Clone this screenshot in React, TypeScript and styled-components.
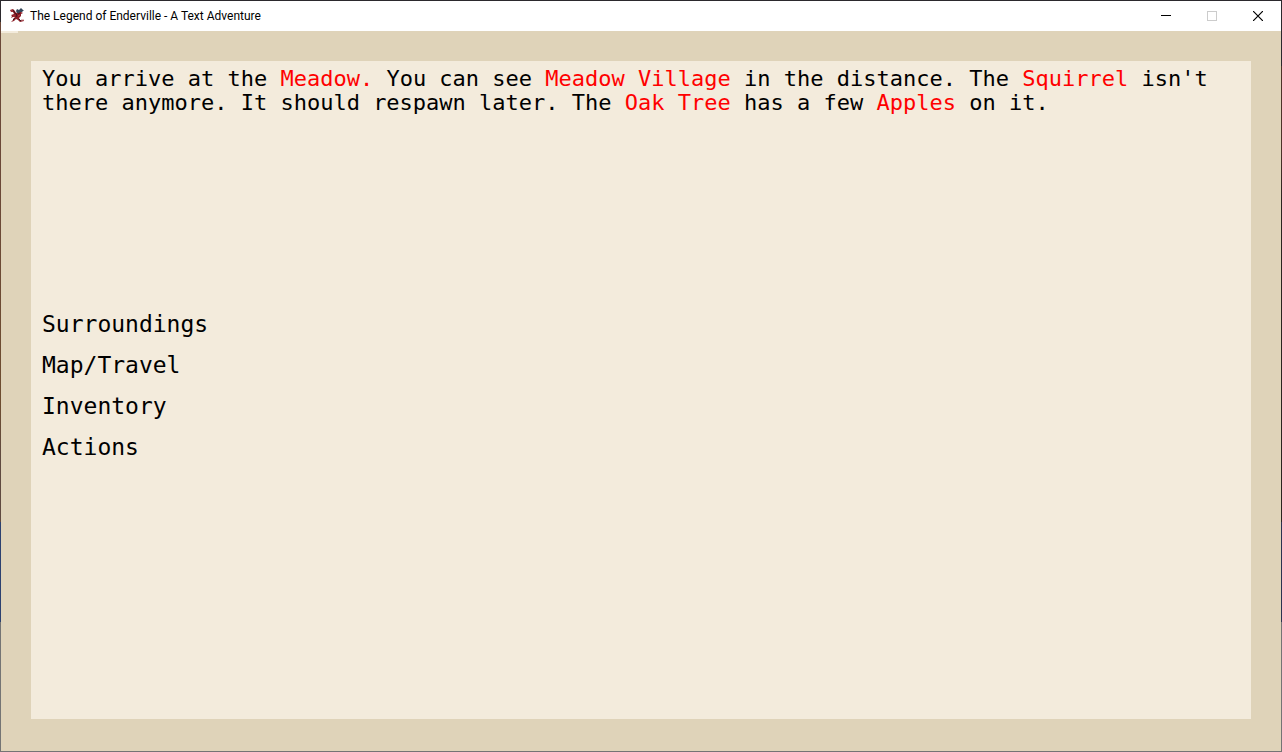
import React from "react";
import styled, { createGlobalStyle } from "styled-components";

const GlobalStyle = createGlobalStyle`
  *, *::before, *::after { box-sizing: border-box; }
  body { margin: 0; background: #2b292d; }
`;

const WindowFrame = styled.div`
  display: flex;
  flex-direction: column;
  min-height: 100vh;
  padding: 1px;
  background:
    linear-gradient(#2b292d, #2b292d) top / 100% 1px no-repeat,
    linear-gradient(#747474, #747474) bottom / 100% 1px no-repeat,
    linear-gradient(to bottom, #2b292d 0 22px, #6b4838 22px 180px, #6e4d30 400px, #5f4a40 460px 522px, #2c4170 522px 622px, #747474 622px) left / 1px 100% no-repeat,
    linear-gradient(to bottom, #2b292d 0 66px, #4c3328 66px 150px, #2b2420 200px 522px, #2b3350 522px 622px, #747474 622px) right / 1px 100% no-repeat;
`;

const TitleBar = styled.header`
  display: flex;
  align-items: center;
  height: 30px;
  padding-left: 8px;
  background: #ffffff;
`;

const Title = styled.h1`
  flex: 1;
  margin: 0;
  padding-left: 4px;
  font: 400 12px/16px Roboto, "Noto Sans", sans-serif;
  color: #000000;
  white-space: nowrap;
`;

const Controls = styled.div`
  display: flex;
  align-self: stretch;
`;

const ControlButton = styled.button`
  display: flex;
  align-items: center;
  justify-content: center;
  width: 46px;
  padding: 0;
  border: 0;
  background: transparent;
  color: #000000;

  &:disabled { color: #cccccc; }
`;

const GameArea = styled.main`
  display: flex;
  flex: 1;
  padding: 30px 30px 32px;
  background:
    linear-gradient(#f3ebdc, #f3ebdc) 0 0 / 17px 2px no-repeat,
    #dfd3b9;
`;

const Parchment = styled.div`
  flex: 1;
  padding: 6px 11px;
  background: #f3ebdc;
  font: 400 22px/24px "DejaVu Sans Mono", monospace;
  color: #000000;
`;

const Story = styled.p`
  min-height: 245px;
  margin: 0;
`;

const Keyword = styled.span`
  color: #ff0000;
`;

const Menu = styled.nav`
  display: flex;
  flex-direction: column;
  align-items: flex-start;
  gap: 17px;
  font-size: 23px;
`;

const MenuButton = styled.button`
  padding: 0;
  border: 0;
  background: transparent;
  font: inherit;
  color: inherit;
`;

const DragonIcon = () => (
  <svg width="17" height="16" viewBox="0 0 17 16" aria-hidden="true">
    <path d="M1 2 4 1 6 3 7 5 9 4 12 4 14 5 12 6 12 8 10 10 11 12 15 12 15 13 11 14 9 12 7 11 5 13 2 14 4 12 4 11 6 9 4 9 2 10 3 8 2 7 5 6 4 4 2 4Z" fill="#8a1c25" />
    <path d="M7 3 8 1 10 2 12 0 14 2 15 2 13 4 11 4 10 5 8 5Z" fill="#34475a" />
    <path d="M4 2 6 5 8 7 7 9M9 6 11 5M4 12 6 10M10 11 12 13" fill="none" stroke="#43121b" />
    <path d="M2 3 4 3M4 8 6 8M9 8 11 7" fill="none" stroke="#b83a40" />
    <path d="M12 12h3" fill="none" stroke="#c58a90" />
  </svg>
);

const MENU = ["Surroundings", "Map/Travel", "Inventory", "Actions"];

export default function App() {
  return (
    <>
      <GlobalStyle />
      <WindowFrame>
        <TitleBar>
          <DragonIcon />
          <Title>The Legend of Enderville - A Text Adventure</Title>
          <Controls>
            <ControlButton type="button" aria-label="Minimize">
              <svg width="10" height="10" viewBox="0 0 10 10" shapeRendering="crispEdges">
                <path d="M0 4h10v1H0z" fill="currentColor" />
              </svg>
            </ControlButton>
            <ControlButton type="button" aria-label="Maximize" disabled>
              <svg width="10" height="10" viewBox="0 0 10 10" shapeRendering="crispEdges">
                <path d="M.5.5h9v9h-9z" fill="none" stroke="currentColor" />
              </svg>
            </ControlButton>
            <ControlButton type="button" aria-label="Close">
              <svg width="10" height="10" viewBox="0 0 10 10">
                <path d="M0 0 10 10M10 0 0 10" fill="none" stroke="currentColor" strokeWidth="1.2" />
              </svg>
            </ControlButton>
          </Controls>
        </TitleBar>
        <GameArea>
          <Parchment>
            <Story>
              You arrive at the <Keyword>Meadow.</Keyword> You can see{" "}
              <Keyword>Meadow Village</Keyword> in the distance. The{" "}
              <Keyword>Squirrel</Keyword> isn't there anymore. It should respawn
              later. The <Keyword>Oak Tree</Keyword> has a few{" "}
              <Keyword>Apples</Keyword> on it.
            </Story>
            <Menu>
              {MENU.map((label) => (
                <MenuButton type="button" key={label}>{label}</MenuButton>
              ))}
            </Menu>
          </Parchment>
        </GameArea>
      </WindowFrame>
    </>
  );
}
